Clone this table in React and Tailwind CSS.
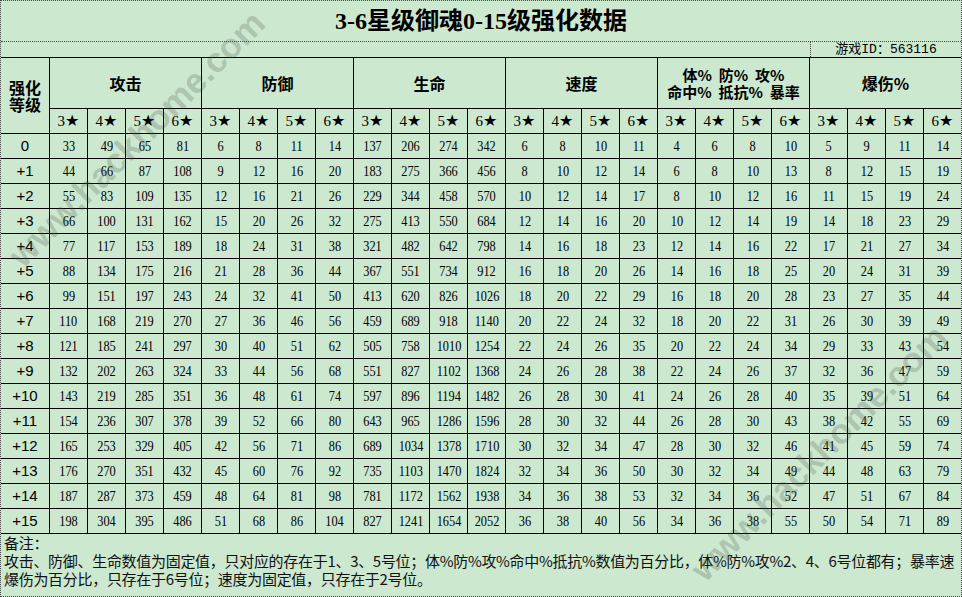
const serif = { fontFamily: '"Liberation Serif", "Noto Sans CJK SC", serif' };

const levels = ["0", "+1", "+2", "+3", "+4", "+5", "+6", "+7", "+8", "+9", "+10", "+11", "+12", "+13", "+14", "+15"];

const rows = [
  [33, 49, 65, 81, 6, 8, 11, 14, 137, 206, 274, 342, 6, 8, 10, 11, 4, 6, 8, 10, 5, 9, 11, 14],
  [44, 66, 87, 108, 9, 12, 16, 20, 183, 275, 366, 456, 8, 10, 12, 14, 6, 8, 10, 13, 8, 12, 15, 19],
  [55, 83, 109, 135, 12, 16, 21, 26, 229, 344, 458, 570, 10, 12, 14, 17, 8, 10, 12, 16, 11, 15, 19, 24],
  [66, 100, 131, 162, 15, 20, 26, 32, 275, 413, 550, 684, 12, 14, 16, 20, 10, 12, 14, 19, 14, 18, 23, 29],
  [77, 117, 153, 189, 18, 24, 31, 38, 321, 482, 642, 798, 14, 16, 18, 23, 12, 14, 16, 22, 17, 21, 27, 34],
  [88, 134, 175, 216, 21, 28, 36, 44, 367, 551, 734, 912, 16, 18, 20, 26, 14, 16, 18, 25, 20, 24, 31, 39],
  [99, 151, 197, 243, 24, 32, 41, 50, 413, 620, 826, 1026, 18, 20, 22, 29, 16, 18, 20, 28, 23, 27, 35, 44],
  [110, 168, 219, 270, 27, 36, 46, 56, 459, 689, 918, 1140, 20, 22, 24, 32, 18, 20, 22, 31, 26, 30, 39, 49],
  [121, 185, 241, 297, 30, 40, 51, 62, 505, 758, 1010, 1254, 22, 24, 26, 35, 20, 22, 24, 34, 29, 33, 43, 54],
  [132, 202, 263, 324, 33, 44, 56, 68, 551, 827, 1102, 1368, 24, 26, 28, 38, 22, 24, 26, 37, 32, 36, 47, 59],
  [143, 219, 285, 351, 36, 48, 61, 74, 597, 896, 1194, 1482, 26, 28, 30, 41, 24, 26, 28, 40, 35, 39, 51, 64],
  [154, 236, 307, 378, 39, 52, 66, 80, 643, 965, 1286, 1596, 28, 30, 32, 44, 26, 28, 30, 43, 38, 42, 55, 69],
  [165, 253, 329, 405, 42, 56, 71, 86, 689, 1034, 1378, 1710, 30, 32, 34, 47, 28, 30, 32, 46, 41, 45, 59, 74],
  [176, 270, 351, 432, 45, 60, 76, 92, 735, 1103, 1470, 1824, 32, 34, 36, 50, 30, 32, 34, 49, 44, 48, 63, 79],
  [187, 287, 373, 459, 48, 64, 81, 98, 781, 1172, 1562, 1938, 34, 36, 38, 53, 32, 34, 36, 52, 47, 51, 67, 84],
  [198, 304, 395, 486, 51, 68, 86, 104, 827, 1241, 1654, 2052, 36, 38, 40, 56, 34, 36, 38, 55, 50, 54, 71, 89],
];

const groups = ["攻击", "防御", "生命", "速度", null, "爆伤%"];
const stars = [3, 4, 5, 6];

function Cell({ children, className = "" }) {
  return (
    <div className={`bg-[#cce8cf] flex items-center justify-center text-black ${className}`}>
      {children}
    </div>
  );
}

function Watermark({ className }) {
  return (
    <div
      className={`absolute pointer-events-none whitespace-nowrap -translate-x-1/2 -translate-y-1/2 rotate-[-45deg] text-[35px] font-bold text-[rgba(80,90,80,0.26)] ${className}`}
      style={{ fontFamily: '"Liberation Sans", Arial, sans-serif' }}
    >
      www.hackhome.com
    </div>
  );
}

export default function App() {
  return (
    <div
      className="relative w-[962px] h-[597px] overflow-hidden bg-[#cce8cf] border border-dotted border-[#444] flex flex-col"
      style={{ fontFamily: '"Noto Sans CJK SC", sans-serif' }}
    >
      {/* title */}
      <div className="h-[41px] shrink-0 border-b border-dotted border-[#444] flex items-center justify-center">
        <h1 className="text-[24px] font-bold text-black leading-none" style={serif}>
          3-6星级御魂0-15级强化数据
        </h1>
      </div>

      {/* game id */}
      <div className="h-[15px] shrink-0 flex">
        <div className="flex-1" />
        <div
          className="w-[151px] border-l border-dotted border-[#444] flex items-center justify-center text-[13px] leading-[15px] text-black"
          style={{ fontFamily: '"Liberation Mono", "Noto Sans CJK SC", monospace' }}
        >
          游戏ID：563116
        </div>
      </div>

      {/* table */}
      <div className="shrink-0 border-t border-b border-black">
        <div className="grid grid-cols-[48px_repeat(24,37px)] grid-rows-[50px_24px_repeat(16,24px)] gap-px bg-black">
          <Cell className="row-span-2 flex-col text-[16px] font-bold leading-[17px] pt-px">
            <span>强化</span>
            <span>等级</span>
          </Cell>
          {groups.map((g, i) =>
            g ? (
              <Cell key={i} className="col-span-4 text-[16px] font-bold">
                {g}
              </Cell>
            ) : (
              <Cell key={i} className="col-span-4 flex-col text-[15px] font-bold leading-[17px]">
                <span>体%&nbsp; 防%&nbsp; 攻%</span>
                <span>命中%&nbsp; 抵抗%&nbsp; 暴率</span>
              </Cell>
            )
          )}
          {groups.map((_, gi) =>
            stars.map((s) => (
              <Cell key={`${gi}-${s}`}>
                <span className="text-[15px]" style={serif}>{s}</span>
                <span
                  className="text-[16px] leading-none"
                  style={{ fontFamily: '"DejaVu Sans", sans-serif' }}
                >
                  ★
                </span>
              </Cell>
            ))
          )}
          {rows.map((r, ri) => [
            <Cell key={`l${ri}`} className="text-[15px]">
              <span style={{ fontFamily: '"Liberation Sans", Arial, sans-serif' }}>{levels[ri]}</span>
            </Cell>,
            ...r.map((v, ci) => (
              <Cell key={`${ri}-${ci}`} className="text-[14px]">
                <span className="inline-block scale-x-[0.88]" style={serif}>
                  {v}
                </span>
              </Cell>
            )),
          ])}
        </div>
      </div>

      {/* notes */}
      <div className="flex-1 overflow-hidden pl-[3px] text-[15px] leading-[18px] tracking-[-0.3px] text-[#111] whitespace-nowrap">
        <div>备注：</div>
        <div>攻击、防御、生命数值为固定值，只对应的存在于1、3、5号位；体%防%攻%命中%抵抗%数值为百分比，体%防%攻%2、4、6号位都有；暴率速</div>
        <div>爆伤为百分比，只存在于6号位；速度为固定值，只存在于2号位。</div>
      </div>

      <Watermark className="left-[136px] top-[138px]" />
      <Watermark className="left-[818px] top-[452px]" />
    </div>
  );
}
